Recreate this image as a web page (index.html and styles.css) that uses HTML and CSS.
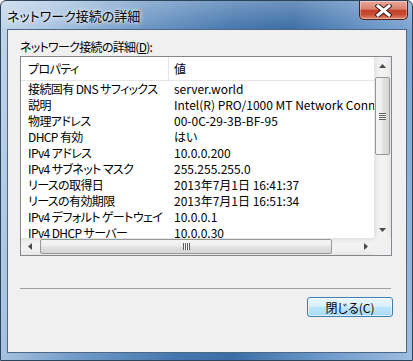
FILE: index.html
```html
<!DOCTYPE html>
<html>
<head>
  <meta charset="utf-8">
  <link rel="stylesheet" href="styles.css">
</head>
<body>
  <div class="window">
    <div class="titlebar">
      <span class="title">ネットワーク接続の詳細</span>
      <div class="close-btn">
        <svg width="17" height="13" viewBox="0 0 17 13">
          <path d="M3 2 L14 11 M14 2 L3 11" stroke="#3a1a16" stroke-width="5" stroke-linecap="square"/>
          <path d="M3 2 L14 11 M14 2 L3 11" stroke="#fff" stroke-width="3" stroke-linecap="square"/>
        </svg>
      </div>
    </div>

    <div class="client">
      <div class="label">ネットワーク接続の詳細(<u>D</u>):</div>

      <div class="listbox">
        <div class="listview">
          <div class="list-head">
            <div class="cell-prop">プロパティ</div>
            <div class="cell-val">値</div>
          </div>
          <div class="row"><div class="cell-prop">接続固有 DNS サフィックス</div><div class="cell-val">server.world</div></div>
          <div class="row"><div class="cell-prop">説明</div><div class="cell-val">Intel(R) PRO/1000 MT Network Connection</div></div>
          <div class="row"><div class="cell-prop">物理アドレス</div><div class="cell-val">00-0C-29-3B-BF-95</div></div>
          <div class="row"><div class="cell-prop">DHCP 有効</div><div class="cell-val">はい</div></div>
          <div class="row"><div class="cell-prop">IPv4 アドレス</div><div class="cell-val">10.0.0.200</div></div>
          <div class="row"><div class="cell-prop">IPv4 サブネット マスク</div><div class="cell-val">255.255.255.0</div></div>
          <div class="row"><div class="cell-prop">リースの取得日</div><div class="cell-val">2013年7月1日 16:41:37</div></div>
          <div class="row"><div class="cell-prop">リースの有効期限</div><div class="cell-val">2013年7月1日 16:51:34</div></div>
          <div class="row"><div class="cell-prop">IPv4 デフォルト ゲートウェイ</div><div class="cell-val">10.0.0.1</div></div>
          <div class="row"><div class="cell-prop">IPv4 DHCP サーバー</div><div class="cell-val">10.0.0.30</div></div>
        </div>

        <div class="vscroll">
          <div class="sb-btn">
            <svg width="7" height="4" viewBox="0 0 7 4"><polygon points="3.5,0 7,4 0,4" fill="#4a4a4a"/></svg>
          </div>
          <div class="vthumb">
            <div class="grip-v"></div>
          </div>
          <div class="sb-fill"></div>
          <div class="sb-btn">
            <svg width="7" height="4" viewBox="0 0 7 4"><polygon points="0,0 7,0 3.5,4" fill="#4a4a4a"/></svg>
          </div>
        </div>

        <div class="hscroll">
          <div class="sb-btn">
            <svg width="4" height="7" viewBox="0 0 4 7"><polygon points="0,3.5 4,0 4,7" fill="#4a4a4a"/></svg>
          </div>
          <div class="hthumb">
            <div class="grip-h"></div>
          </div>
          <div class="sb-fill"></div>
          <div class="sb-btn">
            <svg width="4" height="7" viewBox="0 0 4 7"><polygon points="0,0 4,3.5 0,7" fill="#4a4a4a"/></svg>
          </div>
        </div>

        <div class="corner"></div>
      </div>

      <div class="separator"></div>

      <div class="actions">
        <button class="btn">閉じる(C)</button>
      </div>
    </div>
  </div>
</body>
</html>
```

FILE: styles.css
```css
body {
  margin: 0;
  background: #fff;
  font-family: "Noto Sans CJK JP", "Noto Sans", sans-serif;
  font-size: 12px;
  color: #000;
}

.window {
  width: 413px;
  height: 361px;
  box-sizing: border-box;
  display: flex;
  flex-direction: column;
  border: 1px solid #2c435c;
  border-radius: 6px 6px 0 0;
  background:
    linear-gradient(180deg, rgba(255,255,255,0.25) 0%, rgba(255,255,255,0) 8%),
    linear-gradient(100deg, #c3d6ea 0%, #a9c4e1 12%, #6f98c6 30%, #4677ae 50%, #3c6ea6 62%, #6a96c8 80%, #9ebde0 100%);
}

/* title bar */
.titlebar {
  height: 28px;
  display: flex;
  align-items: flex-start;
  padding: 0 4px 0 6px;
}

.title {
  padding-top: 7px;
  line-height: 16px;
  font-size: 13px;
  font-feature-settings: "palt";
  text-shadow: 0 0 6px #fff, 0 0 3px rgba(255,255,255,0.8);
}

.close-btn {
  margin-left: auto;
  width: 47px;
  height: 18px;
  display: flex;
  align-items: center;
  justify-content: center;
  border: 1px solid #4a1f1a;
  border-top: none;
  border-radius: 0 0 5px 5px;
  background: linear-gradient(180deg, #e9a899 0%, #d9826f 45%, #c4402a 52%, #c84c34 75%, #e08a70 100%);
  box-shadow: inset 0 0 0 1px rgba(255,255,255,0.35);
}

/* client area */
.client {
  flex: 1;
  margin: 0 5px 7px 6px;
  border: 1px solid #4d6886;
  background: #f0f0f0;
  padding: 9px 0 0 12px;
}

.label {
  line-height: 16px;
  letter-spacing: -0.7px;
  font-feature-settings: "palt";
}

.listbox {
  margin-top: 1px;
  width: 372px;
  height: 200px;
  box-sizing: border-box;
  border: 1px solid #828790;
  background: #fff;
  display: grid;
  grid-template-columns: 1fr 17px;
  grid-template-rows: 1fr 17px;
}

.listview {
  overflow: hidden;
}

.list-head {
  display: flex;
  height: 23px;
  border-bottom: 1px solid #e5e5e5;
  line-height: 23px;
}

.list-head .cell-prop {
  border-right: 1px solid #e5e5e5;
}

.row {
  display: flex;
  height: 16px;
  line-height: 16px;
}

.cell-prop {
  width: 148px;
  flex-shrink: 0;
  box-sizing: border-box;
  padding-left: 7px;
  white-space: nowrap;
  overflow: hidden;
  letter-spacing: -0.6px;
  font-feature-settings: "palt";
}

.cell-val {
  padding-left: 5px;
  white-space: nowrap;
  font-feature-settings: "palt";
}

/* scrollbars */
.vscroll {
  grid-row: 1;
  grid-column: 2;
  display: flex;
  flex-direction: column;
  background: linear-gradient(90deg, #e3e3e3, #f2f2f2 30%, #f2f2f2 70%, #e6e6e6);
}

.hscroll {
  grid-row: 2;
  grid-column: 1;
  display: flex;
  background: linear-gradient(180deg, #e3e3e3, #f2f2f2 30%, #f2f2f2 70%, #e6e6e6);
}

.sb-btn {
  width: 17px;
  height: 17px;
  flex-shrink: 0;
  display: flex;
  align-items: center;
  justify-content: center;
}

.sb-fill {
  flex: 1;
}

.vthumb {
  margin: 3px 0 0 1px;
  width: 15px;
  height: 78px;
  box-sizing: border-box;
  border: 1px solid #979797;
  border-radius: 2px;
  background: linear-gradient(90deg, #f5f5f5 0%, #eeeeee 45%, #e0e0e0 55%, #d6d6d6 100%);
  display: flex;
  align-items: center;
  justify-content: center;
}

.hthumb {
  margin: 1px 0 1px 2px;
  width: 292px;
  height: 15px;
  box-sizing: border-box;
  border: 1px solid #979797;
  border-radius: 2px;
  background: linear-gradient(180deg, #f5f5f5 0%, #eeeeee 45%, #e0e0e0 55%, #d6d6d6 100%);
  display: flex;
  align-items: center;
  justify-content: center;
}

.grip-v {
  width: 7px;
  height: 7px;
  background: repeating-linear-gradient(180deg, #5f5f5f 0 1px, #f4f4f4 1px 2px);
}

.grip-h {
  width: 7px;
  height: 7px;
  background: repeating-linear-gradient(90deg, #5f5f5f 0 1px, #f4f4f4 1px 2px);
}

.corner {
  grid-row: 2;
  grid-column: 2;
  background: #f0f0f0;
}

.separator {
  margin-top: 32px;
  width: 371px;
  border-top: 1px solid #a0a0a0;
}

.actions {
  width: 373px;
  margin-top: 8px;
  display: flex;
  justify-content: flex-end;
}

.btn {
  width: 86px;
  height: 20px;
  padding: 0;
  font-family: inherit;
  font-size: 12px;
  color: #000;
  border: 1px solid #3c7fb1;
  border-radius: 3px;
  background: linear-gradient(180deg, #eaf6fd 0%, #d9f0fc 45%, #bee6fd 50%, #a7d9f5 100%);
  box-shadow: inset 0 0 0 1px rgba(255,255,255,0.6);
  font-feature-settings: "palt";
}
```
